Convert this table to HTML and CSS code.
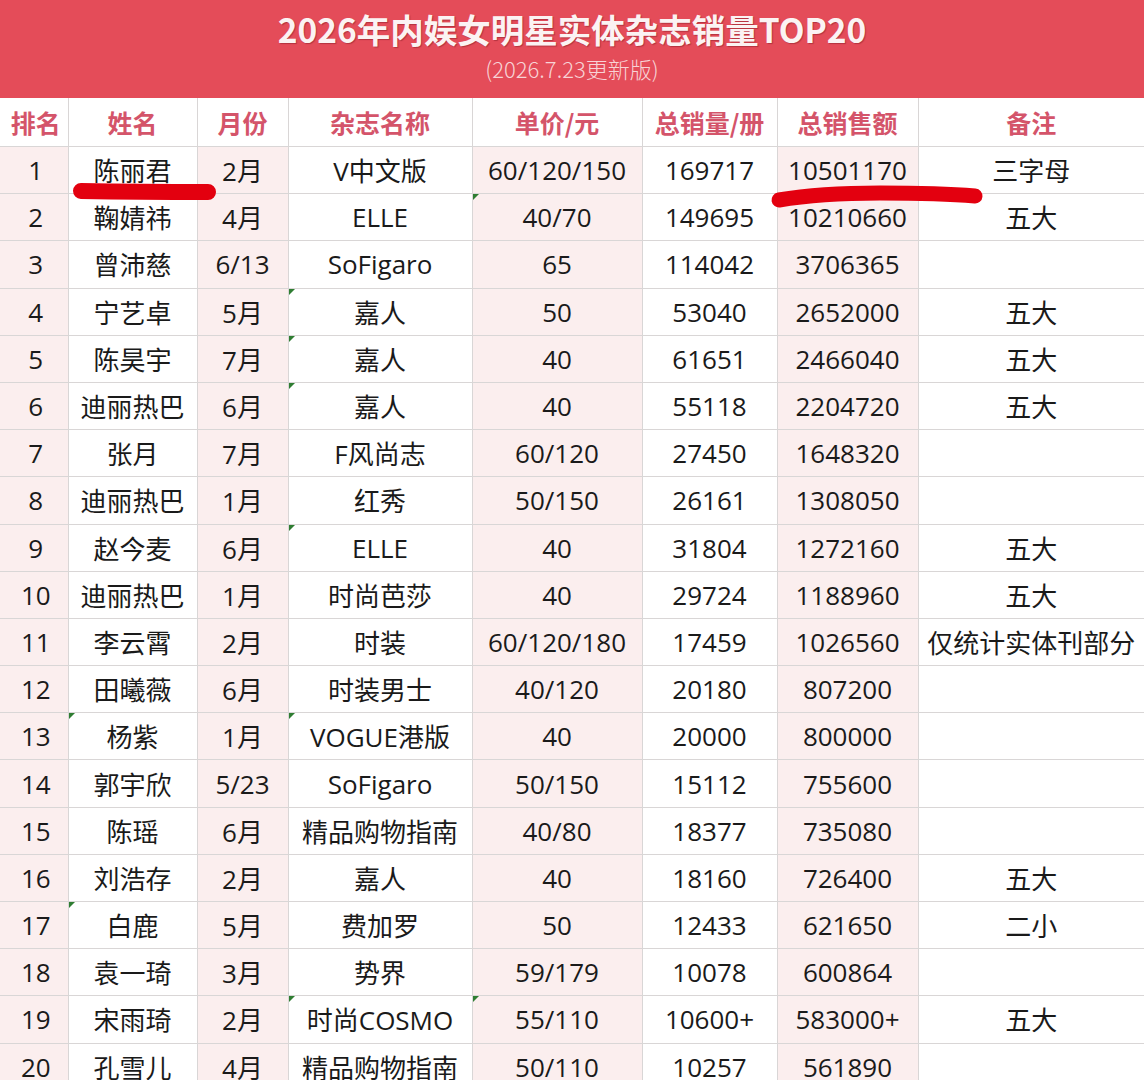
FILE: index.html
```html
<!DOCTYPE html>
<html lang="zh-CN">
<head>
<meta charset="utf-8">
<title>2026年内娱女明星实体杂志销量TOP20</title>
<link rel="stylesheet" href="styles.css">
</head>
<body>
<div class="page">
  <header class="banner">
    <h1 class="title">2026年内娱女明星实体杂志销量TOP20</h1>
    <p class="subtitle">(2026.7.23更新版)</p>
  </header>
  <table class="sheet">
    <colgroup>
      <col class="c-rank"><col class="c-name"><col class="c-month"><col class="c-mag">
      <col class="c-price"><col class="c-qty"><col class="c-amt"><col class="c-note">
    </colgroup>
    <thead>
      <tr><th>排名</th><th>姓名</th><th>月份</th><th>杂志名称</th><th>单价/元</th><th>总销量/册</th><th>总销售额</th><th>备注</th></tr>
    </thead>
    <tbody>
      <tr><td>1</td><td>陈丽君</td><td>2月</td><td>V中文版</td><td>60/120/150</td><td>169717</td><td>10501170</td><td>三字母</td></tr>
      <tr><td>2</td><td>鞠婧祎</td><td>4月</td><td>ELLE</td><td class="mark">40/70</td><td>149695</td><td>10210660</td><td>五大</td></tr>
      <tr><td>3</td><td>曾沛慈</td><td>6/13</td><td>SoFigaro</td><td>65</td><td>114042</td><td>3706365</td><td></td></tr>
      <tr><td>4</td><td>宁艺卓</td><td>5月</td><td class="mark">嘉人</td><td>50</td><td>53040</td><td>2652000</td><td>五大</td></tr>
      <tr><td>5</td><td>陈昊宇</td><td>7月</td><td class="mark">嘉人</td><td>40</td><td>61651</td><td>2466040</td><td>五大</td></tr>
      <tr><td>6</td><td>迪丽热巴</td><td>6月</td><td class="mark">嘉人</td><td>40</td><td>55118</td><td>2204720</td><td>五大</td></tr>
      <tr><td>7</td><td>张月</td><td>7月</td><td>F风尚志</td><td>60/120</td><td>27450</td><td>1648320</td><td></td></tr>
      <tr><td>8</td><td>迪丽热巴</td><td>1月</td><td>红秀</td><td>50/150</td><td>26161</td><td>1308050</td><td></td></tr>
      <tr><td>9</td><td>赵今麦</td><td>6月</td><td class="mark">ELLE</td><td>40</td><td>31804</td><td>1272160</td><td>五大</td></tr>
      <tr><td>10</td><td>迪丽热巴</td><td>1月</td><td>时尚芭莎</td><td>40</td><td>29724</td><td>1188960</td><td>五大</td></tr>
      <tr><td>11</td><td>李云霄</td><td>2月</td><td>时装</td><td>60/120/180</td><td>17459</td><td>1026560</td><td>仅统计实体刊部分</td></tr>
      <tr><td>12</td><td>田曦薇</td><td>6月</td><td>时装男士</td><td>40/120</td><td>20180</td><td>807200</td><td></td></tr>
      <tr><td>13</td><td class="mark">杨紫</td><td>1月</td><td class="mark">VOGUE港版</td><td>40</td><td>20000</td><td>800000</td><td></td></tr>
      <tr><td>14</td><td>郭宇欣</td><td>5/23</td><td>SoFigaro</td><td>50/150</td><td>15112</td><td>755600</td><td></td></tr>
      <tr><td>15</td><td>陈瑶</td><td>6月</td><td>精品购物指南</td><td>40/80</td><td>18377</td><td>735080</td><td></td></tr>
      <tr><td>16</td><td>刘浩存</td><td>2月</td><td>嘉人</td><td>40</td><td>18160</td><td>726400</td><td>五大</td></tr>
      <tr><td>17</td><td class="mark">白鹿</td><td>5月</td><td>费加罗</td><td>50</td><td>12433</td><td>621650</td><td>二小</td></tr>
      <tr><td>18</td><td>袁一琦</td><td>3月</td><td>势界</td><td>59/179</td><td>10078</td><td>600864</td><td></td></tr>
      <tr><td>19</td><td>宋雨琦</td><td>2月</td><td class="mark">时尚COSMO</td><td class="mark">55/110</td><td>10600+</td><td>583000+</td><td>五大</td></tr>
      <tr><td>20</td><td>孔雪儿</td><td>4月</td><td>精品购物指南</td><td>50/110</td><td>10257</td><td>561890</td><td></td></tr>
    </tbody>
  </table>
  <svg class="scribble" width="1144" height="1080" viewBox="0 0 1144 1080" aria-hidden="true">
    <path d="M81 191 Q140 192 208 192" stroke="#e3000f" stroke-width="16" stroke-linecap="round" fill="none"/>
    <path d="M779 200 Q820 193 880 193 Q940 193 975 196" stroke="#e3000f" stroke-width="15" stroke-linecap="round" fill="none"/>
  </svg>
</div>
</body>
</html>
```

FILE: styles.css
```css
html, body {
  margin: 0;
  padding: 0;
  background: #ffffff;
}

.page {
  position: relative;
  width: 1144px;
  height: 1080px;
  overflow: hidden;
  font-family: "Open Sans", "Noto Sans CJK SC", sans-serif;
}

.banner {
  height: 98px;
  background: #e44c59;
  display: flex;
  flex-direction: column;
  align-items: center;
  box-sizing: border-box;
  padding-top: 7px;
}

.title {
  margin: 0;
  font-family: "Noto Sans CJK SC", sans-serif;
  font-weight: 700;
  font-size: 33.5px;
  line-height: 44px;
  color: #fbf3f3;
  text-shadow: 1px 1px 1px rgba(120, 20, 30, 0.45);
}

.subtitle {
  margin: 0;
  font-family: "Noto Sans CJK SC", sans-serif;
  font-weight: 300;
  font-size: 22px;
  line-height: 34px;
  color: #f8d3d6;
}

.sheet {
  border-collapse: collapse;
  table-layout: fixed;
  width: 1144px;
}

.c-rank { width: 68px; }
.c-name { width: 129px; }
.c-month { width: 91px; }
.c-mag { width: 184px; }
.c-price { width: 170px; }
.c-qty { width: 135px; }
.c-amt { width: 141px; }
.c-note { width: 226px; }

.sheet th,
.sheet td {
  border: 1px solid #d9d6d6;
  text-align: center;
  padding: 0;
  white-space: nowrap;
  overflow: visible;
  position: relative;
}

.sheet tr > :first-child { border-left: none; padding-left: 4px; }
.sheet tr > :last-child { border-right: none; }

.sheet th {
  height: 48px;
  font-family: "Noto Sans CJK SC", sans-serif;
  font-weight: 700;
  font-size: 25px;
  color: #d4546a;
  background: #ffffff;
  border-top: none;
}

.sheet td {
  height: 46.2px;
  font-size: 26px;
  color: #1a1a1a;
}

.sheet td:nth-child(1),
.sheet td:nth-child(3),
.sheet td:nth-child(5),
.sheet td:nth-child(7) {
  background: #fbeeee;
}

.sheet td.mark::before {
  content: "";
  position: absolute;
  left: 0;
  top: 0;
  border-top: 6px solid #2f7d32;
  border-right: 6px solid transparent;
}

.scribble {
  position: absolute;
  left: 0;
  top: 0;
  pointer-events: none;
}
```
